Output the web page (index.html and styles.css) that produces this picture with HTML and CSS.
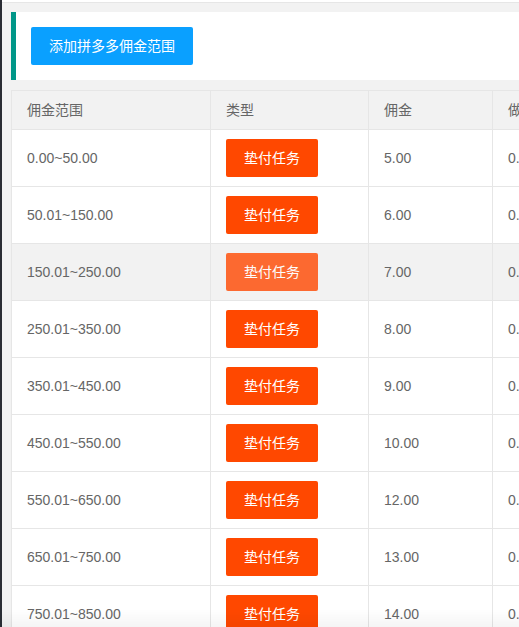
FILE: index.html
```html
<!DOCTYPE html>
<html lang="zh-CN">
<head>
  <meta charset="UTF-8" />
  <meta name="viewport" content="width=device-width, initial-scale=1.0" />
  <title>拼多多佣金范围</title>
  <link rel="stylesheet" href="styles.css">
</head>
<body>
  <div class="page">
    <div class="rail"></div>
    <div class="main">
      <div class="topbar"></div>

      <div class="quote">
        <button type="button" class="btn btn-blue">添加拼多多佣金范围</button>
      </div>

      <table class="grid">
        <colgroup>
          <col class="c-range">
          <col class="c-type">
          <col class="c-fee">
          <col class="c-extra">
          <col class="c-op">
        </colgroup>
        <thead>
          <tr>
            <th>佣金范围</th>
            <th>类型</th>
            <th>佣金</th>
            <th>做单服务费</th>
            <th>操作</th>
          </tr>
        </thead>
        <tbody>
          <tr><td>0.00~50.00</td><td><span class="btn btn-red">垫付任务</span></td><td>5.00</td><td>0.50</td><td></td></tr>
          <tr><td>50.01~150.00</td><td><span class="btn btn-red">垫付任务</span></td><td>6.00</td><td>0.50</td><td></td></tr>
          <tr class="hover"><td>150.01~250.00</td><td><span class="btn btn-red">垫付任务</span></td><td>7.00</td><td>0.50</td><td></td></tr>
          <tr><td>250.01~350.00</td><td><span class="btn btn-red">垫付任务</span></td><td>8.00</td><td>0.50</td><td></td></tr>
          <tr><td>350.01~450.00</td><td><span class="btn btn-red">垫付任务</span></td><td>9.00</td><td>0.50</td><td></td></tr>
          <tr><td>450.01~550.00</td><td><span class="btn btn-red">垫付任务</span></td><td>10.00</td><td>0.50</td><td></td></tr>
          <tr><td>550.01~650.00</td><td><span class="btn btn-red">垫付任务</span></td><td>12.00</td><td>0.50</td><td></td></tr>
          <tr><td>650.01~750.00</td><td><span class="btn btn-red">垫付任务</span></td><td>13.00</td><td>0.50</td><td></td></tr>
          <tr><td>750.01~850.00</td><td><span class="btn btn-red">垫付任务</span></td><td>14.00</td><td>0.50</td><td></td></tr>
        </tbody>
      </table>
    </div>
  </div>
  <div class="fade"></div>
</body>
</html>
```

FILE: styles.css
```css
html, body {
  margin: 0;
  height: 100%;
  overflow: hidden;
}

body {
  font-family: "Liberation Sans", "Noto Sans CJK SC", sans-serif;
  font-size: 14px;
  color: #666;
  background-color: #f2f2f2;
}

.page {
  display: flex;
  min-height: 100vh;
}

.rail {
  width: 2px;
  flex: none;
  background: #2a2d34;
}

.main {
  flex: 1;
  min-width: 0;
  overflow: hidden;
}

.topbar {
  height: 2px;
  background: #fff;
  border-bottom: 1px solid #e6e6e6;
  margin-bottom: 9px;
}

.quote {
  margin-left: 9px;
  padding: 15px;
  background: #fff;
  border-left: 5px solid #009688;
}

.btn {
  display: inline-block;
  height: 38px;
  line-height: 38px;
  padding: 0 18px;
  border: none;
  border-radius: 2px;
  color: #fff;
  font-family: inherit;
  font-size: 14px;
  white-space: nowrap;
  cursor: pointer;
  vertical-align: middle;
}

.btn-blue {
  background-color: #0aa0ff;
}

.btn-red {
  background-color: #ff4800;
}

.grid {
  margin: 10px 0 0 9px;
  width: 800px;
  table-layout: fixed;
  border-collapse: collapse;
  background: #fff;
}

.c-range { width: 199px; }
.c-type { width: 158px; }
.c-fee { width: 124px; }
.c-extra { width: 160px; }

.grid th,
.grid td {
  border: 1px solid #e6e6e6;
  padding: 9px 15px;
  line-height: 20px;
  text-align: left;
  white-space: nowrap;
  overflow: hidden;
}

.grid th {
  font-weight: normal;
  background: #f2f2f2;
}

.grid tr.hover td {
  background: #f2f2f2;
}

.grid tr.hover .btn {
  opacity: 0.8;
}

.fade {
  position: fixed;
  left: 0;
  right: 0;
  bottom: 0;
  height: 18px;
  background: linear-gradient(rgba(0,0,0,0), rgba(0,0,0,0.04));
  pointer-events: none;
}
```
